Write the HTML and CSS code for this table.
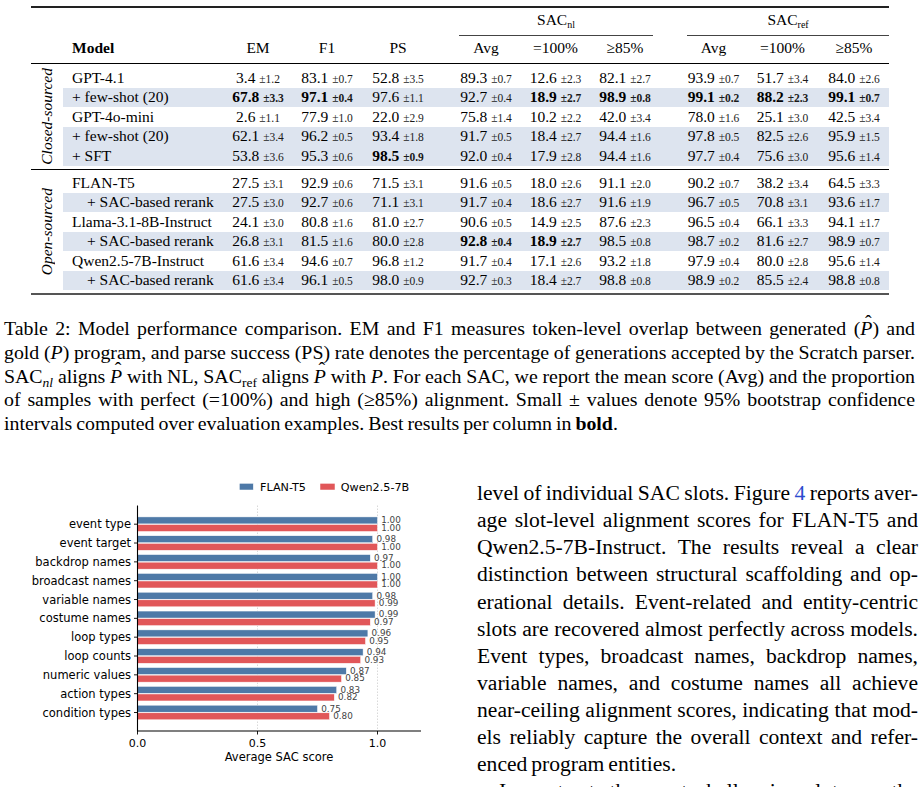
FILE: index.html
```html
<!DOCTYPE html>
<html lang="en">
<head>
    <meta charset="utf-8">
    <title>Model performance comparison</title>
    <link rel="stylesheet" href="styles.css">
</head>
<body>
<div class="page">
    <table class="results">
        <colgroup>
            <col class="w-group"><col class="w-model">
            <col class="w-em"><col class="w-f1"><col class="w-ps"><col class="w-gap1">
            <col class="w-avg1"><col class="w-full1"><col class="w-high1"><col class="w-gap2">
            <col class="w-avg2"><col class="w-full2"><col class="w-high2">
        </colgroup>
        <thead>
            <tr class="head-top">
                <th colspan="6"></th>
                <th colspan="3"><div class="span-head nl">SAC<sub>nl</sub></div></th>
                <th></th>
                <th colspan="3"><div class="span-head ref">SAC<sub>ref</sub></div></th>
            </tr>
            <tr class="head-cols">
                <th></th><th class="model">Model</th><th>EM</th><th>F1</th><th>PS</th><th></th>
                <th>Avg</th><th>=100%</th><th>&ge;85%</th><th></th>
                <th>Avg</th><th>=100%</th><th>&ge;85%</th>
            </tr>
        </thead>
        <tbody>
            <tr class="pad"><td colspan="13"></td></tr>
            <tr>
                <th rowspan="5" class="group"><span>Closed-sourced</span></th>
                <td class="model">GPT-4.1</td>
                <td>3.4 <small>&plusmn;1.2</small></td><td>83.1 <small>&plusmn;0.7</small></td><td>52.8 <small>&plusmn;3.5</small></td><td></td>
                <td>89.3 <small>&plusmn;0.7</small></td><td>12.6 <small>&plusmn;2.3</small></td><td>82.1 <small>&plusmn;2.7</small></td><td></td>
                <td>93.9 <small>&plusmn;0.7</small></td><td>51.7 <small>&plusmn;3.4</small></td><td>84.0 <small>&plusmn;2.6</small></td>
            </tr>
            <tr class="shade">
                <td class="model">+ few-shot (20)</td>
                <td class="best">67.8 <small>&plusmn;3.3</small></td><td class="best">97.1 <small>&plusmn;0.4</small></td><td>97.6 <small>&plusmn;1.1</small></td><td></td>
                <td>92.7 <small>&plusmn;0.4</small></td><td class="best">18.9 <small>&plusmn;2.7</small></td><td class="best">98.9 <small>&plusmn;0.8</small></td><td></td>
                <td class="best">99.1 <small>&plusmn;0.2</small></td><td class="best">88.2 <small>&plusmn;2.3</small></td><td class="best">99.1 <small>&plusmn;0.7</small></td>
            </tr>
            <tr>
                <td class="model">GPT-4o-mini</td>
                <td>2.6 <small>&plusmn;1.1</small></td><td>77.9 <small>&plusmn;1.0</small></td><td>22.0 <small>&plusmn;2.9</small></td><td></td>
                <td>75.8 <small>&plusmn;1.4</small></td><td>10.2 <small>&plusmn;2.2</small></td><td>42.0 <small>&plusmn;3.4</small></td><td></td>
                <td>78.0 <small>&plusmn;1.6</small></td><td>25.1 <small>&plusmn;3.0</small></td><td>42.5 <small>&plusmn;3.4</small></td>
            </tr>
            <tr class="shade">
                <td class="model">+ few-shot (20)</td>
                <td>62.1 <small>&plusmn;3.4</small></td><td>96.2 <small>&plusmn;0.5</small></td><td>93.4 <small>&plusmn;1.8</small></td><td></td>
                <td>91.7 <small>&plusmn;0.5</small></td><td>18.4 <small>&plusmn;2.7</small></td><td>94.4 <small>&plusmn;1.6</small></td><td></td>
                <td>97.8 <small>&plusmn;0.5</small></td><td>82.5 <small>&plusmn;2.6</small></td><td>95.9 <small>&plusmn;1.5</small></td>
            </tr>
            <tr class="shade">
                <td class="model">+ SFT</td>
                <td>53.8 <small>&plusmn;3.6</small></td><td>95.3 <small>&plusmn;0.6</small></td><td class="best">98.5 <small>&plusmn;0.9</small></td><td></td>
                <td>92.0 <small>&plusmn;0.4</small></td><td>17.9 <small>&plusmn;2.8</small></td><td>94.4 <small>&plusmn;1.6</small></td><td></td>
                <td>97.7 <small>&plusmn;0.4</small></td><td>75.6 <small>&plusmn;3.0</small></td><td>95.6 <small>&plusmn;1.4</small></td>
            </tr>
            <tr class="pad rule"><td colspan="13"></td></tr>
        </tbody>
        <tbody>
            <tr class="pad"><td colspan="13"></td></tr>
            <tr>
                <th rowspan="6" class="group"><span>Open-sourced</span></th>
                <td class="model">FLAN-T5</td>
                <td>27.5 <small>&plusmn;3.1</small></td><td>92.9 <small>&plusmn;0.6</small></td><td>71.5 <small>&plusmn;3.1</small></td><td></td>
                <td>91.6 <small>&plusmn;0.5</small></td><td>18.0 <small>&plusmn;2.6</small></td><td>91.1 <small>&plusmn;2.0</small></td><td></td>
                <td>90.2 <small>&plusmn;0.7</small></td><td>38.2 <small>&plusmn;3.4</small></td><td>64.5 <small>&plusmn;3.3</small></td>
            </tr>
            <tr class="shade">
                <td class="model indent">+ SAC-based rerank</td>
                <td>27.5 <small>&plusmn;3.0</small></td><td>92.7 <small>&plusmn;0.6</small></td><td>71.1 <small>&plusmn;3.1</small></td><td></td>
                <td>91.7 <small>&plusmn;0.4</small></td><td>18.6 <small>&plusmn;2.7</small></td><td>91.6 <small>&plusmn;1.9</small></td><td></td>
                <td>96.7 <small>&plusmn;0.5</small></td><td>70.8 <small>&plusmn;3.1</small></td><td>93.6 <small>&plusmn;1.7</small></td>
            </tr>
            <tr>
                <td class="model">Llama-3.1-8B-Instruct</td>
                <td>24.1 <small>&plusmn;3.0</small></td><td>80.8 <small>&plusmn;1.6</small></td><td>81.0 <small>&plusmn;2.7</small></td><td></td>
                <td>90.6 <small>&plusmn;0.5</small></td><td>14.9 <small>&plusmn;2.5</small></td><td>87.6 <small>&plusmn;2.3</small></td><td></td>
                <td>96.5 <small>&plusmn;0.4</small></td><td>66.1 <small>&plusmn;3.3</small></td><td>94.1 <small>&plusmn;1.7</small></td>
            </tr>
            <tr class="shade">
                <td class="model indent">+ SAC-based rerank</td>
                <td>26.8 <small>&plusmn;3.1</small></td><td>81.5 <small>&plusmn;1.6</small></td><td>80.0 <small>&plusmn;2.8</small></td><td></td>
                <td class="best">92.8 <small>&plusmn;0.4</small></td><td class="best">18.9 <small>&plusmn;2.7</small></td><td>98.5 <small>&plusmn;0.8</small></td><td></td>
                <td>98.7 <small>&plusmn;0.2</small></td><td>81.6 <small>&plusmn;2.7</small></td><td>98.9 <small>&plusmn;0.7</small></td>
            </tr>
            <tr>
                <td class="model">Qwen2.5-7B-Instruct</td>
                <td>61.6 <small>&plusmn;3.4</small></td><td>94.6 <small>&plusmn;0.7</small></td><td>96.8 <small>&plusmn;1.2</small></td><td></td>
                <td>91.7 <small>&plusmn;0.4</small></td><td>17.1 <small>&plusmn;2.6</small></td><td>93.2 <small>&plusmn;1.8</small></td><td></td>
                <td>97.9 <small>&plusmn;0.4</small></td><td>80.0 <small>&plusmn;2.8</small></td><td>95.6 <small>&plusmn;1.4</small></td>
            </tr>
            <tr class="shade">
                <td class="model indent">+ SAC-based rerank</td>
                <td>61.6 <small>&plusmn;3.4</small></td><td>96.1 <small>&plusmn;0.5</small></td><td>98.0 <small>&plusmn;0.9</small></td><td></td>
                <td>92.7 <small>&plusmn;0.3</small></td><td>18.4 <small>&plusmn;2.7</small></td><td>98.8 <small>&plusmn;0.8</small></td><td></td>
                <td>98.9 <small>&plusmn;0.2</small></td><td>85.5 <small>&plusmn;2.4</small></td><td>98.8 <small>&plusmn;0.8</small></td>
            </tr>
            <tr class="pad bottom"><td colspan="13"></td></tr>
        </tbody>
    </table>

    <p class="caption">
        <span class="ln">Table 2: Model performance comparison. EM and F1 measures token-level overlap between generated (<i class="hat">P</i>) and</span>
        <span class="ln">gold (<i>P</i>) program, and parse success (PS) rate denotes the percentage of generations accepted by the Scratch parser.</span>
        <span class="ln">SAC<sub><i>nl</i></sub> aligns <i class="hat">P</i> with NL, SAC<sub>ref</sub> aligns <i class="hat">P</i> with <i>P</i>. For each SAC, we report the mean score (Avg) and the proportion</span>
        <span class="ln">of samples with perfect (=100%) and high (&ge;85%) alignment. Small &plusmn; values denote 95% bootstrap confidence</span>
        <span class="ln last">intervals computed over evaluation examples. Best results per column in <b>bold</b>.</span>
    </p>

    <div class="columns">
        <div class="figure">
            <svg class="chart" width="460" height="309" viewBox="0 0.5 460 309">
                <rect class="flan" x="239.3" y="3.8" width="14" height="6.7"/>
                <text class="legend" x="260" y="11.5">FLAN-T5</text>
                <rect class="qwen" x="320" y="3.8" width="15" height="6.7"/>
                <text class="legend" x="340.7" y="11.5">Qwen2.5-7B</text>

                <line class="grid" x1="257.5" y1="26" x2="257.5" y2="251"/>
                <line class="grid" x1="377.5" y1="26" x2="377.5" y2="251"/>

                <g transform="translate(0 44.7)">
                    <line class="tick" x1="134" y1="0" x2="137.5" y2="0"/>
                    <text class="cat" x="131" y="4">event type</text>
                    <rect class="flan" x="137.5" y="-7.3" width="240" height="7"/>
                    <rect class="qwen" x="137.5" y="0.3" width="240" height="7"/>
                    <text class="val" x="381.2" y="-1">1.00</text>
                    <text class="val" x="381.2" y="6.6">1.00</text>
                </g>
                <g transform="translate(0 63.53)">
                    <line class="tick" x1="134" y1="0" x2="137.5" y2="0"/>
                    <text class="cat" x="131" y="4">event target</text>
                    <rect class="flan" x="137.5" y="-7.3" width="235.2" height="7"/>
                    <rect class="qwen" x="137.5" y="0.3" width="240" height="7"/>
                    <text class="val" x="376.4" y="-1">0.98</text>
                    <text class="val" x="381.2" y="6.6">1.00</text>
                </g>
                <g transform="translate(0 82.36)">
                    <line class="tick" x1="134" y1="0" x2="137.5" y2="0"/>
                    <text class="cat" x="131" y="4">backdrop names</text>
                    <rect class="flan" x="137.5" y="-7.3" width="232.8" height="7"/>
                    <rect class="qwen" x="137.5" y="0.3" width="240" height="7"/>
                    <text class="val" x="374" y="-1">0.97</text>
                    <text class="val" x="381.2" y="6.6">1.00</text>
                </g>
                <g transform="translate(0 101.19)">
                    <line class="tick" x1="134" y1="0" x2="137.5" y2="0"/>
                    <text class="cat" x="131" y="4">broadcast names</text>
                    <rect class="flan" x="137.5" y="-7.3" width="240" height="7"/>
                    <rect class="qwen" x="137.5" y="0.3" width="240" height="7"/>
                    <text class="val" x="381.2" y="-1">1.00</text>
                    <text class="val" x="381.2" y="6.6">1.00</text>
                </g>
                <g transform="translate(0 120.02)">
                    <line class="tick" x1="134" y1="0" x2="137.5" y2="0"/>
                    <text class="cat" x="131" y="4">variable names</text>
                    <rect class="flan" x="137.5" y="-7.3" width="235.2" height="7"/>
                    <rect class="qwen" x="137.5" y="0.3" width="237.6" height="7"/>
                    <text class="val" x="376.4" y="-1">0.98</text>
                    <text class="val" x="378.8" y="6.6">0.99</text>
                </g>
                <g transform="translate(0 138.85)">
                    <line class="tick" x1="134" y1="0" x2="137.5" y2="0"/>
                    <text class="cat" x="131" y="4">costume names</text>
                    <rect class="flan" x="137.5" y="-7.3" width="237.6" height="7"/>
                    <rect class="qwen" x="137.5" y="0.3" width="232.8" height="7"/>
                    <text class="val" x="378.8" y="-1">0.99</text>
                    <text class="val" x="374" y="6.6">0.97</text>
                </g>
                <g transform="translate(0 157.68)">
                    <line class="tick" x1="134" y1="0" x2="137.5" y2="0"/>
                    <text class="cat" x="131" y="4">loop types</text>
                    <rect class="flan" x="137.5" y="-7.3" width="230.4" height="7"/>
                    <rect class="qwen" x="137.5" y="0.3" width="228" height="7"/>
                    <text class="val" x="371.6" y="-1">0.96</text>
                    <text class="val" x="369.2" y="6.6">0.95</text>
                </g>
                <g transform="translate(0 176.51)">
                    <line class="tick" x1="134" y1="0" x2="137.5" y2="0"/>
                    <text class="cat" x="131" y="4">loop counts</text>
                    <rect class="flan" x="137.5" y="-7.3" width="225.6" height="7"/>
                    <rect class="qwen" x="137.5" y="0.3" width="223.2" height="7"/>
                    <text class="val" x="366.8" y="-1">0.94</text>
                    <text class="val" x="364.4" y="6.6">0.93</text>
                </g>
                <g transform="translate(0 195.34)">
                    <line class="tick" x1="134" y1="0" x2="137.5" y2="0"/>
                    <text class="cat" x="131" y="4">numeric values</text>
                    <rect class="flan" x="137.5" y="-7.3" width="208.8" height="7"/>
                    <rect class="qwen" x="137.5" y="0.3" width="204" height="7"/>
                    <text class="val" x="350" y="-1">0.87</text>
                    <text class="val" x="345.2" y="6.6">0.85</text>
                </g>
                <g transform="translate(0 214.17)">
                    <line class="tick" x1="134" y1="0" x2="137.5" y2="0"/>
                    <text class="cat" x="131" y="4">action types</text>
                    <rect class="flan" x="137.5" y="-7.3" width="199.2" height="7"/>
                    <rect class="qwen" x="137.5" y="0.3" width="196.8" height="7"/>
                    <text class="val" x="340.4" y="-1">0.83</text>
                    <text class="val" x="338" y="6.6">0.82</text>
                </g>
                <g transform="translate(0 233)">
                    <line class="tick" x1="134" y1="0" x2="137.5" y2="0"/>
                    <text class="cat" x="131" y="4">condition types</text>
                    <rect class="flan" x="137.5" y="-7.3" width="180" height="7"/>
                    <rect class="qwen" x="137.5" y="0.3" width="192" height="7"/>
                    <text class="val" x="321.2" y="-1">0.75</text>
                    <text class="val" x="333.2" y="6.6">0.80</text>
                </g>

                <line class="axis" x1="137.5" y1="26" x2="137.5" y2="252"/>
                <line class="axis" x1="137" y1="251.5" x2="421" y2="251.5"/>
                <line class="tick" x1="137.5" y1="251.5" x2="137.5" y2="255"/>
                <line class="tick" x1="257.5" y1="251.5" x2="257.5" y2="255"/>
                <line class="tick" x1="377.5" y1="251.5" x2="377.5" y2="255"/>
                <text class="xtick" x="137.5" y="267">0.0</text>
                <text class="xtick" x="257.5" y="267">0.5</text>
                <text class="xtick" x="377.5" y="267">1.0</text>
                <text class="xlabel" x="279" y="281.5">Average SAC score</text>
            </svg>
        </div>

        <div class="body-text">
            <span class="ln">level of individual SAC slots. Figure <a class="ref" href="#">4</a> reports aver-</span>
            <span class="ln">age slot-level alignment scores for FLAN-T5 and</span>
            <span class="ln">Qwen2.5-7B-Instruct. The results reveal a clear</span>
            <span class="ln">distinction between structural scaffolding and op-</span>
            <span class="ln">erational details. Event-related and entity-centric</span>
            <span class="ln">slots are recovered almost perfectly across models.</span>
            <span class="ln">Event types, broadcast names, backdrop names,</span>
            <span class="ln">variable names, and costume names all achieve</span>
            <span class="ln">near-ceiling alignment scores, indicating that mod-</span>
            <span class="ln">els reliably capture the overall context and refer-</span>
            <span class="ln last">enced program entities.</span>
            <span class="ln indent">In contrast, the most challenging slots are the</span>
        </div>
    </div>
</div>
</body>
</html>
```

FILE: styles.css
```css
*,
*:before,
*:after {
    margin: 0;
    padding: 0;
    box-sizing: border-box;
}

html,
body {
    height: 100%;
    overflow: hidden;
}

body {
    background-color: #ffffff;
    color: #000000;
    font-family: "Liberation Serif", "Times New Roman", serif;
}

.page {
    width: 923px;
}

/* results table */

.results {
    margin: 6px 0 0 31px;
    width: 858px;
    table-layout: fixed;
    border-collapse: separate;
    border-spacing: 0;
    font-size: 15.5px;
    line-height: 19.5px;
}

.w-group { width: 32px; }
.w-model { width: 162px; }
.w-em { width: 66px; }
.w-f1 { width: 72px; }
.w-ps { width: 70px; }
.w-gap1 { width: 19px; }
.w-avg1 { width: 68px; }
.w-full1 { width: 71px; }
.w-high1 { width: 68px; }
.w-gap2 { width: 22px; }
.w-avg2 { width: 65px; }
.w-full2 { width: 73px; }
.w-high2 { width: 70px; }

.results th,
.results td {
    padding: 0;
    font-weight: normal;
    text-align: center;
    white-space: nowrap;
    vertical-align: middle;
}

.results .head-top th {
    border-top: 2px solid #222222;
    vertical-align: bottom;
}

.span-head {
    line-height: 24px;
    padding-bottom: 3px;
    border-bottom: 1px solid #444444;
}

.span-head.nl {
    margin: 0 6px 0 7px;
}

.span-head.ref {
    margin: 0 0 0 6px;
}

.span-head sub {
    font-size: 10px;
    line-height: 0;
    vertical-align: -3px;
}

.results .head-cols th {
    line-height: 24px;
    padding-bottom: 3px;
    border-bottom: 1px solid #000000;
}

.results .head-cols th.model {
    font-weight: bold;
    text-align: left;
    padding-left: 9px;
}

.results td {
    height: 19.5px;
    line-height: 16px;
}

.results td.model {
    text-align: left;
    padding-left: 9px;
}

.results td.model.indent {
    padding-left: 24px;
}

.results td small {
    font-size: 11.5px;
    line-height: 1;
    color: #1a1a1a;
}

.results td.best {
    font-weight: bold;
}

.results tr.shade td {
    background-color: #dde4ef;
}

.results tr.pad td {
    height: 4px;
    font-size: 0;
    line-height: 0;
}

.results tr.pad.rule td {
    height: 4.5px;
    border-bottom: 1px solid #000000;
}

.results tbody + tbody tr.pad td {
    height: 3px;
}

.results tbody + tbody tr.pad.bottom td {
    height: 5px;
    border-bottom: 2px solid #555555;
}

.results th.group {
    line-height: 0;
}

.results th.group span {
    display: inline-block;
    vertical-align: middle;
    margin: -8px 0;
    writing-mode: vertical-rl;
    transform: rotate(180deg);
    font-style: italic;
    line-height: 20px;
}

/* caption */

.caption {
    margin: 22px 0 0 4px;
    width: 911px;
    font-size: 19.85px;
    line-height: 23.75px;
    word-spacing: -1px;
}

.ln {
    display: block;
    text-align: justify;
    text-align-last: justify;
}

.ln.last {
    text-align-last: left;
}

.caption sub {
    font-size: 13.5px;
    line-height: 0;
    vertical-align: -4px;
    word-spacing: 0;
}

.hat {
    position: relative;
}

.hat:after {
    content: "\02C6";
    position: absolute;
    left: 0.24em;
    top: -0.36em;
    font-style: normal;
}

/* bottom columns */

.columns {
    display: flex;
    margin-top: 44.5px;
}

.figure {
    width: 460px;
    flex: none;
}

.chart {
    display: block;
    font-family: "DejaVu Sans", sans-serif;
}

.chart .flan {
    fill: #4e79a7;
    stroke: #ffffff;
    stroke-width: 0.5;
}

.chart .qwen {
    fill: #e15759;
    stroke: #ffffff;
    stroke-width: 0.5;
}

.chart .legend {
    font-size: 11.2px;
    fill: #000000;
}

.chart .grid {
    stroke: #cfcfcf;
    stroke-width: 0.8;
    stroke-dasharray: 1.5 1.5;
}

.chart .axis {
    stroke: #000000;
    stroke-width: 1.1;
}

.chart .tick {
    stroke: #000000;
    stroke-width: 0.9;
}

.chart .cat {
    font-size: 11.5px;
    text-anchor: end;
    fill: #000000;
}

.chart .val {
    font-size: 8.8px;
    fill: #444444;
}

.chart .xtick {
    font-size: 11px;
    text-anchor: middle;
    fill: #000000;
}

.chart .xlabel {
    font-size: 11.5px;
    text-anchor: middle;
    fill: #000000;
}

.body-text {
    margin-left: 17px;
    width: 441px;
    flex: none;
    font-size: 21.6px;
    line-height: 27.07px;
    word-spacing: -1.5px;
}

.body-text .indent {
    text-indent: 22px;
}

.body-text .ref {
    color: #2b4bcf;
    text-decoration: none;
}
```
